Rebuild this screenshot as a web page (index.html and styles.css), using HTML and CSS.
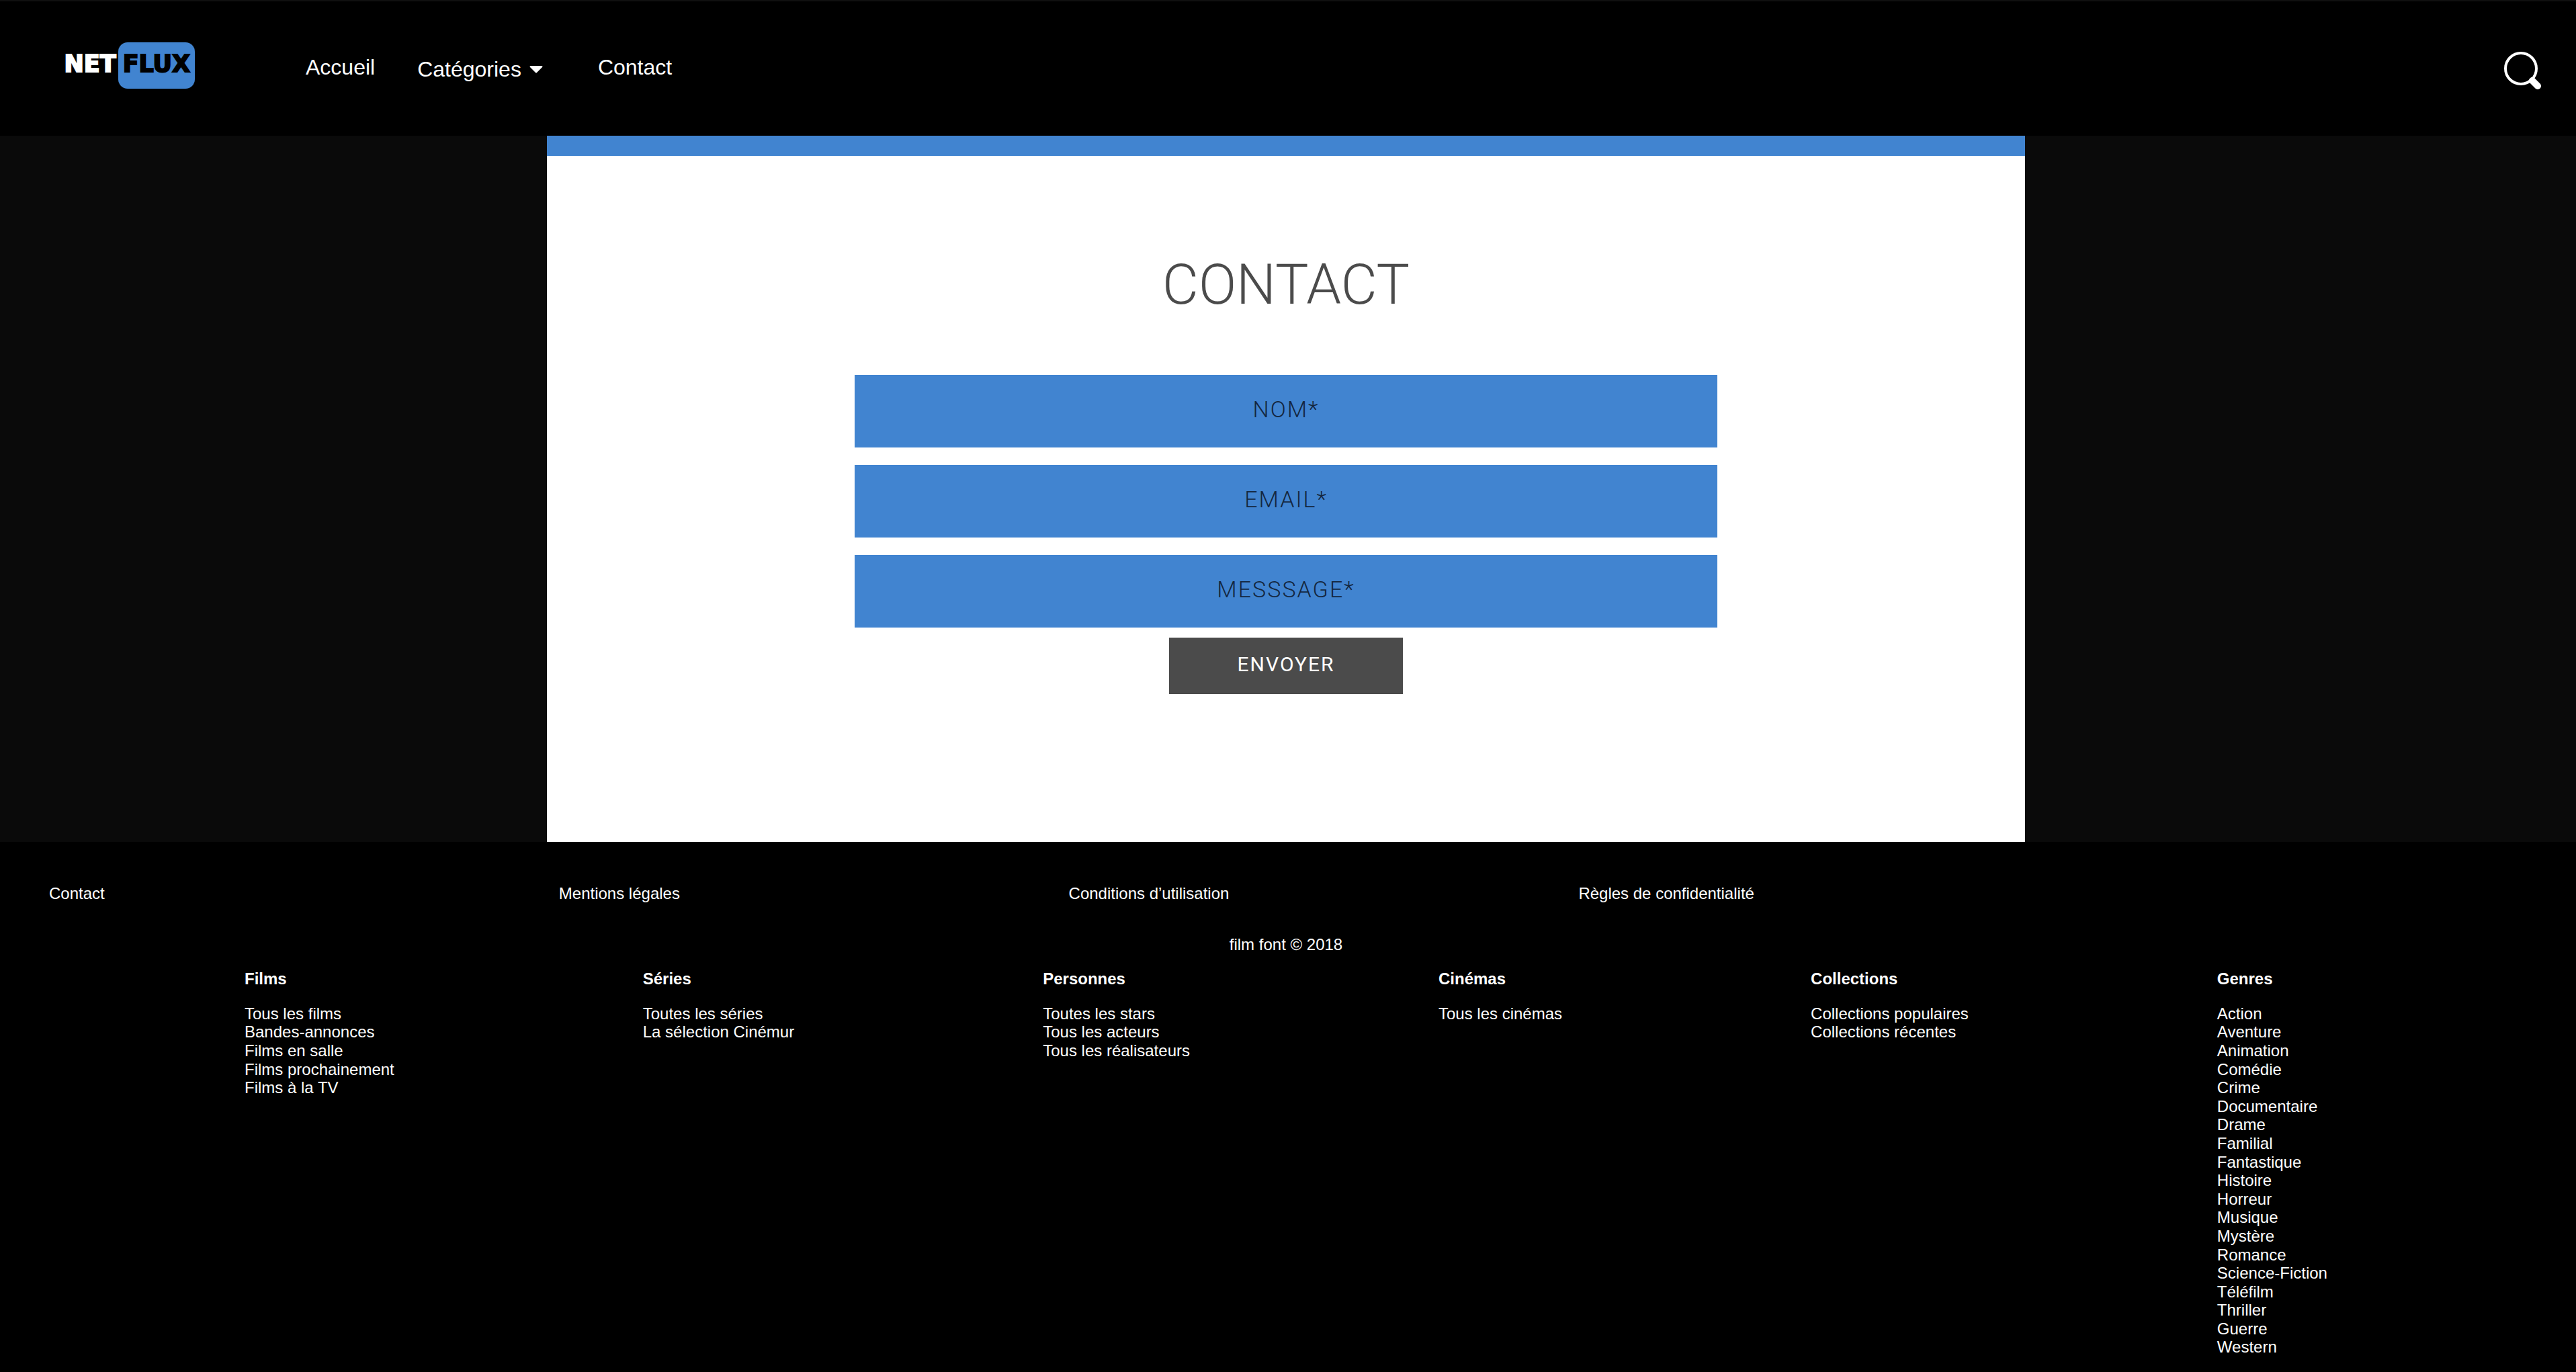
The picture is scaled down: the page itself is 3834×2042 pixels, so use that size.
FILE: index.html
```html
<!DOCTYPE html>
<html lang="fr">
<head>
<meta charset="utf-8">
<meta name="viewport" content="width=device-width, initial-scale=1">
<title>Netflux - Contact</title>
<link rel="stylesheet" href="styles.css">
</head>
<body>
<header class="header">
  <a class="logo" href="#"><span class="logo-net">NET</span><span class="logo-flux">FLUX</span></a>
  <nav class="nav">
    <a class="nav-link" href="#">Accueil</a>
    <button class="nav-menu" type="button">Catégories
      <svg class="caret" width="20" height="11" viewBox="0 0 20 11" aria-hidden="true"><path d="M1 0H19Q20 1 19 2L11 10Q10 11 9 10L1 2Q0 1 1 0Z" fill="currentColor"/></svg>
    </button>
    <a class="nav-link" href="#">Contact</a>
  </nav>
  <button class="search" type="button" aria-label="Rechercher">
    <svg width="58" height="58" viewBox="0 0 58 58" fill="none" stroke="currentColor" aria-hidden="true"><circle cx="26" cy="26" r="23" stroke-width="4"/><path d="M43 44L51 52" stroke-width="10" stroke-linecap="round"/><path d="M40 41L44 45" stroke-width="7"/></svg>
  </button>
</header>

<main class="main">
  <section class="card">
    <h1 class="title">CONTACT</h1>
    <form class="form">
      <input class="field" type="text" name="nom" placeholder="NOM*" aria-label="Nom">
      <input class="field" type="email" name="email" placeholder="EMAIL*" aria-label="Email">
      <input class="field" type="text" name="message" placeholder="MESSSAGE*" aria-label="Message">
      <button class="submit" type="submit">ENVOYER</button>
    </form>
  </section>
</main>

<footer class="footer">
  <ul class="legal">
    <li><a href="#">Contact</a></li>
    <li><a href="#">Mentions légales</a></li>
    <li><a href="#">Conditions d’utilisation</a></li>
    <li><a href="#">Règles de confidentialité</a></li>
  </ul>
  <p class="copyright">film font © 2018</p>
  <div class="sitemap">
    <section>
      <h2 class="group-title">Films</h2>
      <ul class="group">
        <li><a href="#">Tous les films</a></li>
        <li><a href="#">Bandes-annonces</a></li>
        <li><a href="#">Films en salle</a></li>
        <li><a href="#">Films prochainement</a></li>
        <li><a href="#">Films à la TV</a></li>
      </ul>
    </section>
    <section>
      <h2 class="group-title">Séries</h2>
      <ul class="group">
        <li><a href="#">Toutes les séries</a></li>
        <li><a href="#">La sélection Cinémur</a></li>
      </ul>
    </section>
    <section>
      <h2 class="group-title">Personnes</h2>
      <ul class="group">
        <li><a href="#">Toutes les stars</a></li>
        <li><a href="#">Tous les acteurs</a></li>
        <li><a href="#">Tous les réalisateurs</a></li>
      </ul>
    </section>
    <section>
      <h2 class="group-title">Cinémas</h2>
      <ul class="group">
        <li><a href="#">Tous les cinémas</a></li>
      </ul>
    </section>
    <section>
      <h2 class="group-title">Collections</h2>
      <ul class="group">
        <li><a href="#">Collections populaires</a></li>
        <li><a href="#">Collections récentes</a></li>
      </ul>
    </section>
    <section>
      <h2 class="group-title">Genres</h2>
      <ul class="group">
        <li><a href="#">Action</a></li>
        <li><a href="#">Aventure</a></li>
        <li><a href="#">Animation</a></li>
        <li><a href="#">Comédie</a></li>
        <li><a href="#">Crime</a></li>
        <li><a href="#">Documentaire</a></li>
        <li><a href="#">Drame</a></li>
        <li><a href="#">Familial</a></li>
        <li><a href="#">Fantastique</a></li>
        <li><a href="#">Histoire</a></li>
        <li><a href="#">Horreur</a></li>
        <li><a href="#">Musique</a></li>
        <li><a href="#">Mystère</a></li>
        <li><a href="#">Romance</a></li>
        <li><a href="#">Science-Fiction</a></li>
        <li><a href="#">Téléfilm</a></li>
        <li><a href="#">Thriller</a></li>
        <li><a href="#">Guerre</a></li>
        <li><a href="#">Western</a></li>
      </ul>
    </section>
  </div>
</footer>
</body>
</html>
```
FILE: styles.css
```css
* {
  box-sizing: border-box;
}

body {
  margin: 0;
  background: #000;
  color: #fff;
  font-family: "Liberation Sans", Arial, sans-serif;
  font-size: 24px;
  line-height: 1.15;
}

a {
  color: inherit;
  text-decoration: none;
}

ul {
  margin: 0;
  padding: 0;
  list-style: none;
}

button {
  border: 0;
  background: none;
  color: inherit;
  font: inherit;
  cursor: pointer;
}

/* Header */

.header {
  display: flex;
  align-items: center;
  min-height: 202px;
  padding: 0 50px 0 92px;
  border-top: 2px solid #101010;
}

.logo {
  display: flex;
  align-items: center;
  justify-content: flex-end;
  width: 198px;
  margin-bottom: 10px;
  font-family: "DejaVu Sans", sans-serif;
  font-size: 35px;
  font-weight: 700;
  line-height: 64px;
  -webkit-text-stroke: 2px currentColor;
}

.logo-flux {
  padding: 0 7px 5px;
  border-radius: 14px;
  background: #4184d0;
  color: #000;
}

.logo-net {
  padding: 0 3px 5px 0;
}

.nav {
  display: flex;
  align-items: center;
  margin: 0 0 4px 165px;
  font-size: 32px;
  line-height: 36px;
}

.nav-menu {
  display: flex;
  align-items: center;
  gap: 12px;
  margin: 0 82px 0 63px;
  padding: 6px 0 0;
}

.search {
  display: flex;
  margin-left: auto;
  padding: 6px 0 0;
}

/* Contact form */

.main {
  padding-right: 6px;
  background: #0a0a0a;
}

.card {
  max-width: 2200px;
  margin: 0 auto;
  padding: 144px 40px 220px;
  border-top: 30px solid #4184d0;
  background: #fff;
  text-align: center;
}

.title {
  margin: 0 0 86px;
  color: #4b4b4b;
  font-family: Roboto, sans-serif;
  font-size: 83px;
  font-weight: 300;
  line-height: 96px;
}

.form {
  display: flex;
  flex-direction: column;
  align-items: center;
}

.field {
  width: 100%;
  max-width: 1284px;
  height: 108px;
  margin-bottom: 26px;
  padding: 0 20px 6px;
  border: 0;
  border-radius: 0;
  background: #4184d0;
  color: #14273f;
  font-family: Roboto, sans-serif;
  font-size: 34px;
  font-weight: 300;
  letter-spacing: 2px;
  text-align: center;
}

.field::placeholder {
  color: #14273f;
  opacity: 1;
}

.field:last-of-type {
  margin-bottom: 15px;
}

.submit {
  width: 348px;
  height: 84px;
  padding: 0 0 4px;
  background: #4b4b4b;
  font-family: Roboto, sans-serif;
  font-size: 30px;
  letter-spacing: 2px;
}

/* Footer */

.footer {
  padding: 63px 0 20px;
}

.legal {
  display: grid;
  grid-template-columns: repeat(5, 1fr);
  padding: 0 20px;
}

.legal li {
  padding-left: 53px;
}

.copyright {
  margin: 48px 0 24px;
  padding-right: 6px;
  text-align: center;
}

.sitemap {
  display: flex;
  justify-content: space-evenly;
  margin-left: -6px;
}

.group-title {
  margin: 0 0 24px;
  font-size: 24px;
}
```
